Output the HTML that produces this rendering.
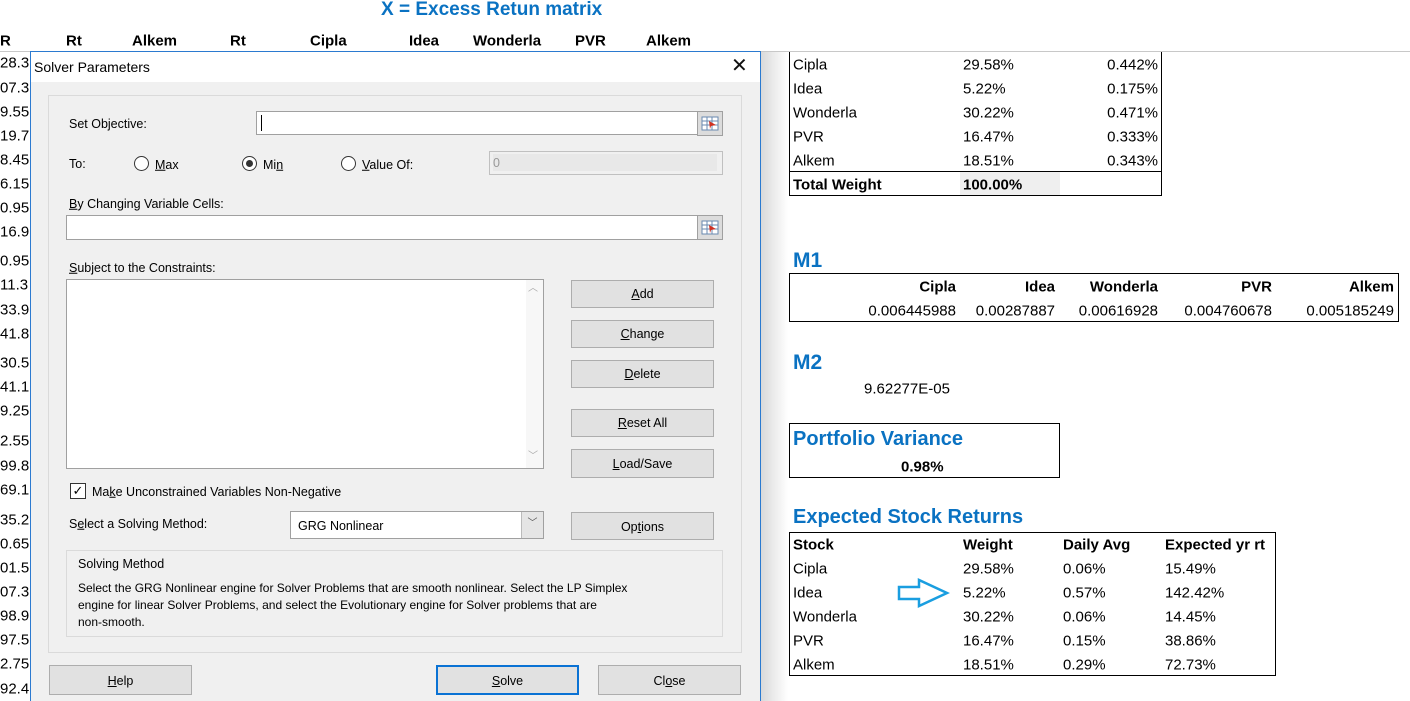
<!DOCTYPE html>
<html><head><style>
*{margin:0;padding:0;box-sizing:border-box}
body{width:1410px;height:701px;overflow:hidden;background:#fff;position:relative;font-family:"Liberation Sans",sans-serif;}
.a{position:absolute;white-space:nowrap;line-height:1}
.x{font-size:15px;color:#000;transform:translateY(-50%)}
.b{font-weight:bold}
.blue{color:#0a72c2;font-weight:bold}
.d{font-size:12.5px;color:#000;transform:translateY(-50%)}
.box{position:absolute;border:1px solid #000}
.btn{position:absolute;background:#e1e1e1;border:1px solid #adadad;font-size:12.5px;display:flex;align-items:center;justify-content:center;color:#000}
.inp{position:absolute;background:#fff;border:1px solid #a0a0a0}
.ref{position:absolute;width:26px;height:25px;background:#dcdcdc;border:1px solid #a0a0a0}
.rad{position:absolute;width:15px;height:15px;border:1px solid #333;border-radius:50%;background:#fff}
.r{text-align:right;transform:translate(-100%,-50%)}
</style></head><body>
<div class="a blue" style="left:381px;top:0px;font-size:19px">X = Excess Retun matrix</div>
<div class="a x b" style="left:0;top:41px">R</div>
<div class="a x b" style="left:66px;top:41px">Rt</div>
<div class="a x b" style="left:132px;top:41px">Alkem</div>
<div class="a x b" style="left:230px;top:41px">Rt</div>
<div class="a x b" style="left:310px;top:41px">Cipla</div>
<div class="a x b" style="left:409px;top:41px">Idea</div>
<div class="a x b" style="left:473px;top:41px">Wonderla</div>
<div class="a x b" style="left:575px;top:41px">PVR</div>
<div class="a x b" style="left:646px;top:41px">Alkem</div>
<div style="position:absolute;left:0;top:51px;width:1410px;height:1px;background:#c8c8c8"></div>
<div style="position:absolute;left:760px;top:52px;width:28px;height:649px;background:linear-gradient(90deg,#d8d8d8,#fff)"></div>

<div class="a x" style="left:0;top:63px">28.3</div><div class="a x" style="left:0;top:88px">07.3</div><div class="a x" style="left:0;top:112px">9.55</div><div class="a x" style="left:0;top:136px">19.7</div><div class="a x" style="left:0;top:160px">8.45</div><div class="a x" style="left:0;top:184px">6.15</div><div class="a x" style="left:0;top:208px">0.95</div><div class="a x" style="left:0;top:232px">16.9</div><div class="a x" style="left:0;top:261px">0.95</div><div class="a x" style="left:0;top:285px">11.3</div><div class="a x" style="left:0;top:310px">33.9</div><div class="a x" style="left:0;top:334px">41.8</div><div class="a x" style="left:0;top:363px">30.5</div><div class="a x" style="left:0;top:387px">41.1</div><div class="a x" style="left:0;top:411px">9.25</div><div class="a x" style="left:0;top:441px">2.55</div><div class="a x" style="left:0;top:466px">99.8</div><div class="a x" style="left:0;top:490px">69.1</div><div class="a x" style="left:0;top:520px">35.2</div><div class="a x" style="left:0;top:544px">0.65</div><div class="a x" style="left:0;top:568px">01.5</div><div class="a x" style="left:0;top:592px">07.3</div><div class="a x" style="left:0;top:616px">98.9</div><div class="a x" style="left:0;top:640px">97.5</div><div class="a x" style="left:0;top:664px">2.75</div><div class="a x" style="left:0;top:689px">92.4</div>

<div style="position:absolute;left:30px;top:51px;width:731px;height:650px;background:#f0f0f0;border:1px solid #2b7ad0;border-bottom:none"></div>
<div style="position:absolute;left:31px;top:52px;width:729px;height:30px;background:#fff"></div>
<div class="a d" style="left:34px;top:67px;font-size:14px">Solver Parameters</div>
<div class="a" style="left:731px;top:56px;font-size:20px;color:#111">✕</div>
<div style="position:absolute;left:48px;top:95px;width:694px;height:558px;border:1px solid #dadada"></div>

<div class="a d" style="left:69px;top:124px">Set Objective:</div>
<div class="inp" style="left:256px;top:111px;width:442px;height:24px"><div style="position:absolute;left:4px;top:3px;width:1px;height:16px;background:#000"></div></div>
<div class="ref" style="left:697px;top:111px"><svg width="24" height="23"><rect x="4" y="5" width="16" height="13" fill="#fff" stroke="#6a8ab0"/><path d="M4 9H20M4 13H20M9 5V18M14 5V18" stroke="#6a8ab0"/><path d="M11 9L18 13L13 14L12 17Z" fill="#d03020"/></svg></div>
<div class="a d" style="left:69px;top:164px">To:</div>
<div class="rad" style="left:134px;top:156px"></div><div class="a d" style="left:155px;top:165px"><u>M</u>ax</div>
<div class="rad" style="left:242px;top:156px"><div style="position:absolute;left:3px;top:3px;width:7px;height:7px;border-radius:50%;background:#333"></div></div><div class="a d" style="left:263px;top:165px">Mi<u>n</u></div>
<div class="rad" style="left:341px;top:156px"></div><div class="a d" style="left:362px;top:165px"><u>V</u>alue Of:</div>
<div style="position:absolute;left:489px;top:151px;width:234px;height:24px;border:1px solid #c0c0c0;background:#f0f0f0"><div style="position:absolute;left:3px;top:2px;width:224px;height:17px;background:#e8e8e8"></div></div>
<div class="a d" style="left:493px;top:163px;color:#999">0</div>
<div class="a d" style="left:69px;top:204px"><u>B</u>y Changing Variable Cells:</div>
<div class="inp" style="left:66px;top:215px;width:632px;height:25px"></div>
<div class="ref" style="left:697px;top:215px"><svg width="24" height="23"><rect x="4" y="5" width="16" height="13" fill="#fff" stroke="#6a8ab0"/><path d="M4 9H20M4 13H20M9 5V18M14 5V18" stroke="#6a8ab0"/><path d="M11 9L18 13L13 14L12 17Z" fill="#d03020"/></svg></div>
<div class="a d" style="left:69px;top:268px"><u>S</u>ubject to the Constraints:</div>
<div class="inp" style="left:66px;top:279px;width:478px;height:190px"><div style="position:absolute;right:0;top:0;width:17px;height:188px;background:#f7f7f7"></div><div class="a" style="right:5px;top:4px;font-size:10px;color:#aaa">︿</div><div class="a" style="right:5px;top:172px;font-size:10px;color:#aaa">﹀</div></div>
<div class="btn" style="left:571px;top:280px;width:143px;height:28px"><u>A</u>dd</div>
<div class="btn" style="left:571px;top:320px;width:143px;height:28px"><u>C</u>hange</div>
<div class="btn" style="left:571px;top:360px;width:143px;height:28px"><u>D</u>elete</div>
<div class="btn" style="left:571px;top:409px;width:143px;height:28px"><u>R</u>eset All</div>
<div class="btn" style="left:571px;top:449px;width:143px;height:29px"><u>L</u>oad/Save</div>
<div style="position:absolute;left:70px;top:483px;width:16px;height:16px;border:1px solid #333;background:#fff;font-size:13px;line-height:14px;text-align:center">✓</div>
<div class="a d" style="left:92px;top:492px">Ma<u>k</u>e Unconstrained Variables Non-Negative</div>
<div class="a d" style="left:69px;top:524px">S<u>e</u>lect a Solving Method:</div>
<div style="position:absolute;left:290px;top:511px;width:254px;height:28px;background:#fff;border:1px solid #a0a0a0"><div style="position:absolute;right:0;top:0;width:22px;height:26px;background:#e5e5e5;border-left:1px solid #bbb;font-size:10px;text-align:center;line-height:24px;color:#555">﹀</div></div>
<div class="a d" style="left:298px;top:526px">GRG Nonlinear</div>
<div class="btn" style="left:571px;top:512px;width:143px;height:28px;padding-top:2px">Op<u>t</u>ions</div>
<div style="position:absolute;left:66px;top:550px;width:657px;height:87px;border:1px solid #dadada"></div>
<div class="a d" style="left:78px;top:564px">Solving Method</div>
<div class="a d" style="left:78px;top:588px;font-size:12px">Select the GRG Nonlinear engine for Solver Problems that are smooth nonlinear. Select the LP Simplex</div>
<div class="a d" style="left:78px;top:605px;font-size:12px">engine for linear Solver Problems, and select the Evolutionary engine for Solver problems that are</div>
<div class="a d" style="left:78px;top:622px;font-size:12px">non-smooth.</div>
<div class="btn" style="left:49px;top:665px;width:143px;height:30px;padding-top:2px"><u>H</u>elp</div>
<div class="btn" style="left:436px;top:665px;width:143px;height:30px;border:2px solid #0a72d4;padding-top:2px"><u>S</u>olve</div>
<div class="btn" style="left:598px;top:665px;width:143px;height:30px;padding-top:2px">Cl<u>o</u>se</div>

<div class="box" style="left:789px;top:52px;width:373px;height:144px;border-top:none"></div>
<div style="position:absolute;left:789px;top:171px;width:373px;height:1px;background:#000"></div>
<div style="position:absolute;left:960px;top:172px;width:100px;height:23px;background:#efefef"></div>
<div class="a x" style="left:793px;top:65px">Cipla</div><div class="a x" style="left:963px;top:65px">29.58%</div><div class="a x r" style="left:1158px;top:65px">0.442%</div>
<div class="a x" style="left:793px;top:89px">Idea</div><div class="a x" style="left:963px;top:89px">5.22%</div><div class="a x r" style="left:1158px;top:89px">0.175%</div>
<div class="a x" style="left:793px;top:113px">Wonderla</div><div class="a x" style="left:963px;top:113px">30.22%</div><div class="a x r" style="left:1158px;top:113px">0.471%</div>
<div class="a x" style="left:793px;top:137px">PVR</div><div class="a x" style="left:963px;top:137px">16.47%</div><div class="a x r" style="left:1158px;top:137px">0.333%</div>
<div class="a x" style="left:793px;top:161px">Alkem</div><div class="a x" style="left:963px;top:161px">18.51%</div><div class="a x r" style="left:1158px;top:161px">0.343%</div>
<div class="a x b" style="left:793px;top:185px">Total Weight</div><div class="a x b" style="left:963px;top:185px">100.00%</div>

<div class="a blue" style="left:793px;top:250px;font-size:21px">M1</div>
<div class="box" style="left:789px;top:273px;width:610px;height:49px"></div>
<div class="a x b r" style="left:956px;top:287px">Cipla</div><div class="a x b r" style="left:1055px;top:287px">Idea</div><div class="a x b r" style="left:1158px;top:287px">Wonderla</div><div class="a x b r" style="left:1272px;top:287px">PVR</div><div class="a x b r" style="left:1394px;top:287px">Alkem</div>
<div class="a x r" style="left:956px;top:311px">0.006445988</div><div class="a x r" style="left:1055px;top:311px">0.00287887</div><div class="a x r" style="left:1158px;top:311px">0.00616928</div><div class="a x r" style="left:1272px;top:311px">0.004760678</div><div class="a x r" style="left:1394px;top:311px">0.005185249</div>

<div class="a blue" style="left:793px;top:352px;font-size:21px">M2</div>
<div class="a x" style="left:864px;top:389px">9.62277E-05</div>
<div class="box" style="left:789px;top:423px;width:271px;height:55px"></div>
<div class="a blue" style="left:793px;top:429px;font-size:20px">Portfolio Variance</div>
<div class="a x b" style="left:901px;top:467px">0.98%</div>

<div class="a blue" style="left:793px;top:507px;font-size:20px">Expected Stock Returns</div>
<div class="box" style="left:789px;top:532px;width:487px;height:144px"></div>
<div class="a x b" style="left:793px;top:545px">Stock</div><div class="a x b" style="left:963px;top:545px">Weight</div><div class="a x b" style="left:1063px;top:545px">Daily Avg</div><div class="a x b" style="left:1165px;top:545px">Expected yr rt</div>
<div class="a x" style="left:793px;top:569px">Cipla</div><div class="a x" style="left:963px;top:569px">29.58%</div><div class="a x" style="left:1063px;top:569px">0.06%</div><div class="a x" style="left:1165px;top:569px">15.49%</div>
<div class="a x" style="left:793px;top:593px">Idea</div><div class="a x" style="left:963px;top:593px">5.22%</div><div class="a x" style="left:1063px;top:593px">0.57%</div><div class="a x" style="left:1165px;top:593px">142.42%</div>
<div class="a x" style="left:793px;top:617px">Wonderla</div><div class="a x" style="left:963px;top:617px">30.22%</div><div class="a x" style="left:1063px;top:617px">0.06%</div><div class="a x" style="left:1165px;top:617px">14.45%</div>
<div class="a x" style="left:793px;top:641px">PVR</div><div class="a x" style="left:963px;top:641px">16.47%</div><div class="a x" style="left:1063px;top:641px">0.15%</div><div class="a x" style="left:1165px;top:641px">38.86%</div>
<div class="a x" style="left:793px;top:665px">Alkem</div><div class="a x" style="left:963px;top:665px">18.51%</div><div class="a x" style="left:1063px;top:665px">0.29%</div><div class="a x" style="left:1165px;top:665px">72.73%</div>
<svg style="position:absolute;left:897px;top:578px" width="54" height="30"><path d="M2 9 H22 V2 L50 15 L22 28 V21 H2 Z" fill="none" stroke="#1a9ee0" stroke-width="2.5"/></svg>
</body></html>
